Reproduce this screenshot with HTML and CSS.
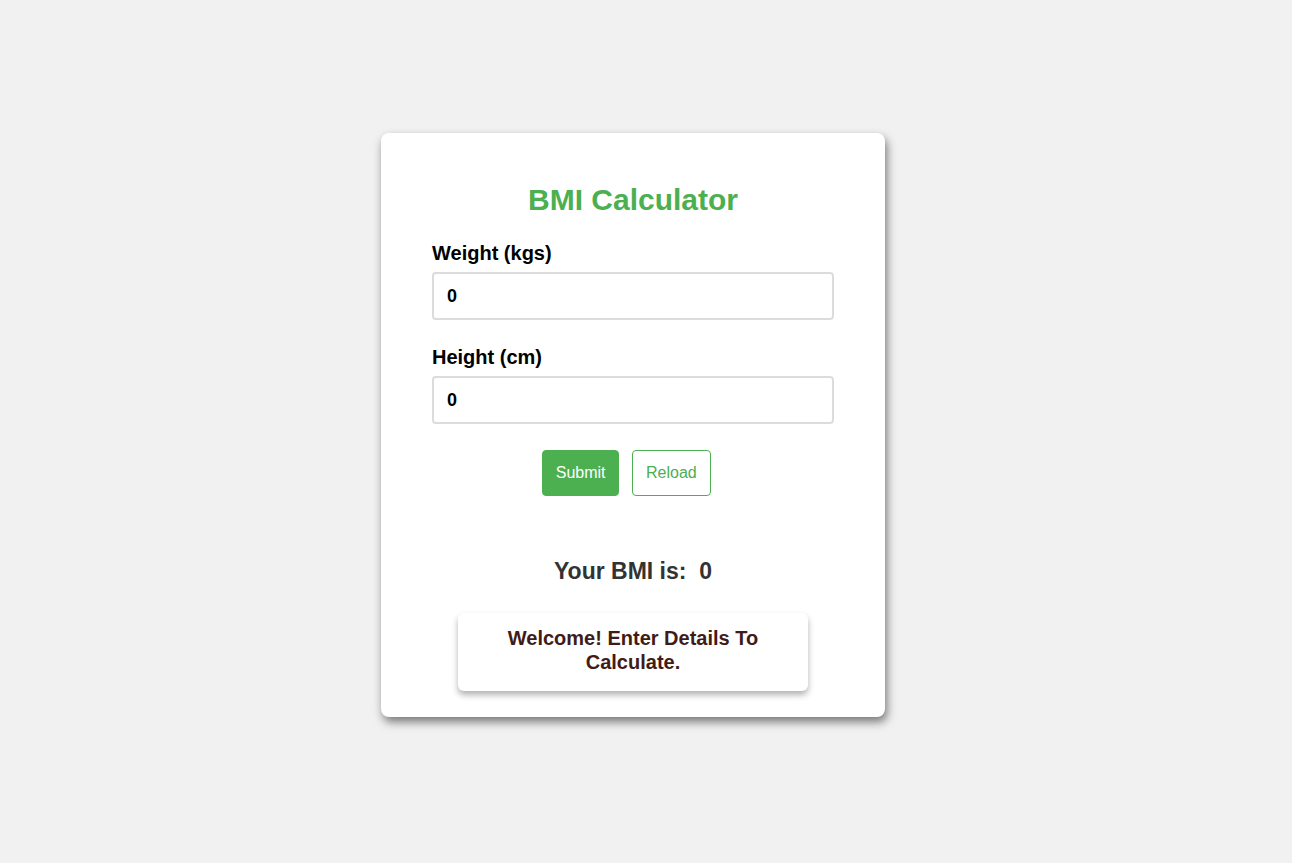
FILE: index.html
```html
<!DOCTYPE html>
<html lang="en">
<head>
<meta charset="UTF-8">
<title>BMI Calculator</title>
<link rel="stylesheet" href="styles.css">
</head>
<body>
<main class="page">
  <div class="card">
    <h1 class="title">BMI Calculator</h1>
    <div class="field">
      <label class="label" for="weight">Weight (kgs)</label>
      <input class="input" id="weight" type="text" value="0">
    </div>
    <div class="field">
      <label class="label" for="height">Height (cm)</label>
      <input class="input" id="height" type="text" value="0">
    </div>
    <div class="actions">
      <button class="btn btn-primary" type="button">Submit</button>
      <button class="btn btn-outline" type="button">Reload</button>
    </div>
    <h3 class="result">Your BMI is:&nbsp; 0</h3>
    <div class="message">Welcome! Enter Details To Calculate.</div>
  </div>
</main>
</body>
</html>
```

FILE: styles.css
```css
* { box-sizing: border-box; }

html, body {
  margin: 0;
  background: #f1f1f1;
  font-family: "Liberation Sans", Arial, sans-serif;
}

.page {
  min-height: 100vh;
  padding: 133px 0 0 381px;
  display: flex;
  align-items: flex-start;
}

.card {
  width: 504px;
  background: #fff;
  border-radius: 8px;
  box-shadow: 2px 5px 10px rgba(0, 0, 0, 0.5);
  padding: 50px 51px 26px 51px;
  display: flex;
  flex-direction: column;
}

.title {
  margin: 0 0 24px;
  text-align: center;
  color: #4caf50;
  font-size: 30px;
  font-weight: bold;
  line-height: 34px;
}

.field {
  display: flex;
  flex-direction: column;
  margin-bottom: 25px;
}

.label {
  font-size: 20px;
  font-weight: bold;
  color: #000;
  line-height: 23px;
  margin-top: 1px;
  margin-bottom: 7px;
}

.input {
  height: 48px;
  width: 100%;
  border: 2px solid #dcdcdc;
  border-radius: 4px;
  padding: 0 13px;
  font-family: "Liberation Sans", Arial, sans-serif;
  font-size: 18px;
  font-weight: bold;
  color: #000;
  outline: none;
}

.actions {
  display: flex;
  justify-content: center;
  margin-top: 1px;
}

.btn {
  font-family: "Liberation Sans", Arial, sans-serif;
  font-size: 16px;
  line-height: 18px;
  height: 46px;
  padding: 0 13px;
  margin-right: 13px;
  border-radius: 4px;
  border: 1px solid #4caf50;
  cursor: pointer;
}

.btn-primary {
  background: #4caf50;
  color: #fff;
  padding: 0 12.5px;
}

.btn-outline {
  background: #fff;
  color: #4caf50;
}

.result {
  margin: 62px 0 28px;
  text-align: center;
  font-size: 23px;
  line-height: 27px;
  font-weight: bold;
  color: #333;
}

.message {
  align-self: center;
  width: 350px;
  padding: 13px 24px 17px;
  text-align: center;
  font-size: 20px;
  line-height: 24px;
  font-weight: bold;
  color: #421b17;
  background: #fff;
  border-radius: 6px;
  box-shadow: 0 4px 6px rgba(0, 0, 0, 0.3);
}
```
